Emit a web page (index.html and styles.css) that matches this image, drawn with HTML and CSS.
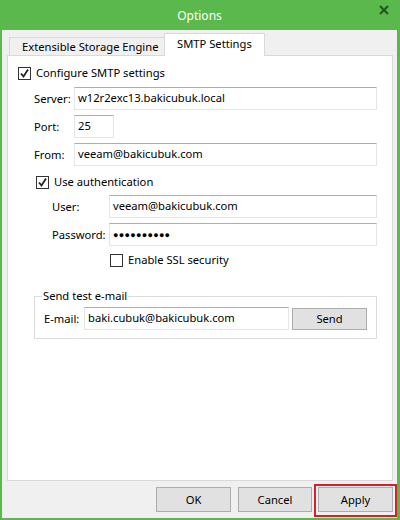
FILE: index.html
```html
<!DOCTYPE html>
<html>
<head>
<meta charset="utf-8">
<link rel="stylesheet" href="styles.css">
</head>
<body>
<div class="window">
  <div class="titlebar">
    <span></span>
    <span class="title">Options</span>
    <svg class="close" width="10" height="10" viewBox="0 0 10 10"><path d="M1 1L9 9M9 1L1 9" stroke="#1d5a1d" stroke-width="2.2" fill="none"/></svg>
  </div>
  <div class="content">
    <div class="tabs">
      <div class="tab">Extensible Storage Engine</div>
      <div class="tab active">SMTP Settings</div>
    </div>
    <div class="panel">
      <div class="check top-check">
        <span class="box"><svg width="11" height="11" viewBox="0 0 11 11"><path d="M2 5.5L4.5 8.5L9 1.5" stroke="#222" stroke-width="1.8" fill="none"/></svg></span>
        <span>Configure SMTP settings</span>
      </div>
      <div class="grid server-grid">
        <span>Server:</span><div class="input">w12r2exc13.bakicubuk.local</div>
        <span>Port:</span><div class="input port">25</div>
        <span>From:</span><div class="input">veeam@bakicubuk.com</div>
      </div>
      <div class="check auth-check">
        <span class="box"><svg width="11" height="11" viewBox="0 0 11 11"><path d="M2 5.5L4.5 8.5L9 1.5" stroke="#222" stroke-width="1.8" fill="none"/></svg></span>
        <span>Use authentication</span>
      </div>
      <div class="grid auth-grid">
        <span>User:</span><div class="input">veeam@bakicubuk.com</div>
        <span>Password:</span><div class="input password">●●●●●●●●●●</div>
      </div>
      <div class="check ssl-check">
        <span class="box empty"></span>
        <span>Enable SSL security</span>
      </div>
      <fieldset class="group">
        <legend>Send test e-mail</legend>
        <div class="test-row">
          <span>E-mail:</span>
          <div class="input">baki.cubuk@bakicubuk.com</div>
          <button class="btn send">Send</button>
        </div>
      </fieldset>
    </div>
  </div>
  <div class="footer">
    <button class="btn ok">OK</button>
    <button class="btn cancel">Cancel</button>
    <div class="highlight"><button class="btn apply">Apply</button></div>
  </div>
</div>
</body>
</html>
```
FILE: styles.css
```css
* { box-sizing: border-box; }
html, body { margin: 0; padding: 0; }
body {
  width: 400px;
  height: 520px;
  font-family: "Noto Sans", "Open Sans", sans-serif;
  font-size: 11.2px;
  color: #000;
  overflow: hidden;
}
.window {
  width: 400px;
  height: 520px;
  background: #f0f0f0;
  border-left: 2px solid #5bb84d;
  border-right: 3px solid #5bb84d;
  border-bottom: 2px solid #5bb84d;
  display: flex;
  flex-direction: column;
}
.titlebar {
  height: 30px;
  flex: none;
  background: #5bb84d;
  display: grid;
  grid-template-columns: 1fr auto 1fr;
  align-items: center;
}
.title {
  color: #fff;
  font-size: 12px;
  line-height: 16px;
  margin-top: 1px;
}
.close {
  justify-self: end;
  align-self: start;
  margin-top: 5px;
  margin-right: 8px;
}
.content {
  flex: 1;
  padding: 3px 4px 0 5px;
  display: flex;
  flex-direction: column;
}
.tabs {
  height: 22px;
  display: flex;
  align-items: flex-end;
  padding-left: 2px;
}
.tab {
  height: 18px;
  width: 156px;
  border: 1px solid #d9d9d9;
  border-bottom: none;
  background: #f0f0f0;
  line-height: 17px;
  padding-left: 12px;
  white-space: nowrap;
}
.tab.active {
  position: relative;
  z-index: 1;
  height: 23px;
  width: 101px;
  margin-bottom: -1px;
  margin-left: -1px;
  background: #fff;
  padding-left: 12px;
  line-height: 20px;
}
.panel {
  height: 426px;
  background: #fff;
  border: 1px solid #d9d9d9;
  padding-top: 9px;
}
.check {
  display: flex;
  align-items: center;
  height: 16px;
  line-height: 16px;
  gap: 5px;
}
.box {
  width: 13px;
  height: 13px;
  border: 1px solid #333;
  background: #fff;
  display: flex;
  align-items: center;
  justify-content: center;
  flex: none;
}
.top-check { margin-left: 10px; }
.auth-check { margin-left: 28px; margin-top: 8px; }
.ssl-check { margin-left: 102px; margin-top: 6px; }
.grid {
  display: grid;
  row-gap: 5px;
  align-items: center;
}
.server-grid {
  margin-top: 6px;
  margin-left: 26px;
  width: 343px;
  grid-template-columns: 40px 1fr;
}
.auth-grid {
  margin-top: 5px;
  margin-left: 44px;
  width: 325px;
  grid-template-columns: 57px 1fr;
}
.input {
  height: 23px;
  border: 1px solid #e3e5e8;
  border-top-color: #abadb3;
  background: #fff;
  padding-left: 3px;
  line-height: 20px;
  white-space: nowrap;
  overflow: hidden;
}
.input.port { width: 40px; }
.input.password { font-size: 9px; letter-spacing: 0.3px; line-height: 21px; }
.group {
  margin: 20px 0 0 26px;
  width: 343px;
  border: 1px solid #dcdcdc;
  padding: 0 9px 8px 7px;
}
.group legend {
  padding: 0 1px;
  line-height: 16px;
}
.test-row {
  margin-top: 3px;
  margin-left: 2px;
  display: flex;
  align-items: center;
}
.test-row span { width: 40px; flex: none; }
.test-row .input { flex: 1; }
.btn {
  font-family: inherit;
  font-size: inherit;
  color: #000;
  background: #e1e1e1;
  border: 1px solid #adadad;
  padding: 0;
  margin: 0;
}
.send {
  width: 75px;
  height: 22px;
  margin-left: 3px;
}
.footer {
  height: 37px;
  flex: none;
  display: flex;
  justify-content: flex-end;
  align-items: flex-start;
  padding-top: 3px;
}
.ok, .cancel {
  height: 25px;
  margin-top: 3px;
}
.ok { width: 75px; margin-right: 7px; }
.cancel { width: 74px; margin-right: 2px; }
.highlight {
  border: 2px solid #d4202a;
  padding: 1px 2px 3px 2px;
}
.apply { width: 75px; height: 25px; display: block; }
```
